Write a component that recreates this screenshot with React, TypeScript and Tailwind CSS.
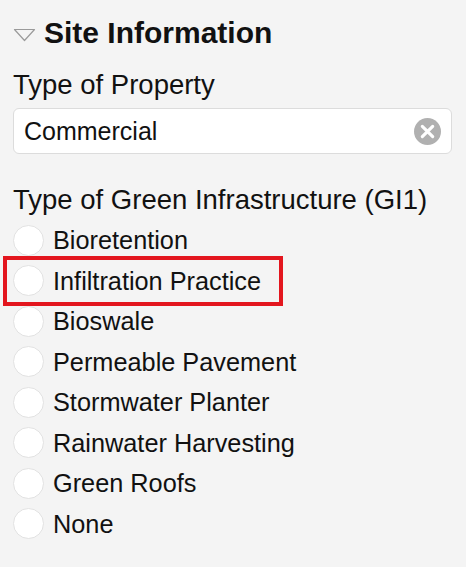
import { useState } from "react";

const options = [
  "Bioretention",
  "Infiltration Practice",
  "Bioswale",
  "Permeable Pavement",
  "Stormwater Planter",
  "Rainwater Harvesting",
  "Green Roofs",
  "None",
];

export default function App() {
  const [selected, setSelected] = useState<string | null>(null);

  return (
    <div className="min-h-[567px] w-[466px] bg-[#f4f4f4] px-[13px] pt-[16px] font-['Liberation_Sans',Arial,sans-serif] text-[#111]">
      <div className="flex items-center gap-[8px]">
        <svg width="23" height="14" viewBox="0 0 23 14" className="mt-[3px] shrink-0">
          <path d="M1.5 1.5 L21.5 1.5 L11.5 12.5 Z" fill="none" stroke="#9a9a9a" strokeWidth="1.2" strokeLinejoin="round" />
        </svg>
        <h2 className="text-[30px] font-bold leading-[34px]">Site Information</h2>
      </div>

      <p className="mt-[20px] text-[27.5px] leading-[30px]">Type of Property</p>
      <div className="mt-[8px] flex h-[46px] w-[439px] items-center rounded-[6px] border border-[#dcdcdc] bg-white pl-[10px] pr-[10px]">
        <span className="flex-1 text-[25px] leading-[30px]">Commercial</span>
        <svg width="27" height="27" viewBox="0 0 26 26" className="shrink-0">
          <circle cx="13" cy="13" r="13" fill="#b0b0b0" />
          <path d="M8 8 L18 18 M18 8 L8 18" stroke="white" strokeWidth="3" strokeLinecap="round" />
        </svg>
      </div>

      <p className="mt-[31px] whitespace-nowrap text-[27.5px] leading-[30px]">Type of Green Infrastructure (GI1)</p>
      <div className="mt-[5px] flex flex-col">
        {options.map((opt) => {
          const boxed = opt === "Infiltration Practice";
          return (
            <label
              key={opt}
              onClick={() => setSelected(opt)}
              className={
                boxed
                  ? "-my-[5px] -ml-[10px] flex h-[50.5px] w-[280px] cursor-pointer items-center gap-[9px] border-[4px] border-[#e3161e] pl-[6px]"
                  : "-ml-[10px] flex h-[40.5px] w-[280px] cursor-pointer items-center gap-[9px] pl-[10px]"
              }
            >
              <span
                className={
                  selected === opt
                    ? "h-[31px] w-[31px] shrink-0 rounded-full border-[9px] border-[#3388cc] bg-white"
                    : "h-[31px] w-[31px] shrink-0 rounded-full border border-[#e2e2e2] bg-white"
                }
              />
              <span className="whitespace-nowrap text-[25.3px] leading-[28px]">{opt}</span>
            </label>
          );
        })}
      </div>
    </div>
  );
}
